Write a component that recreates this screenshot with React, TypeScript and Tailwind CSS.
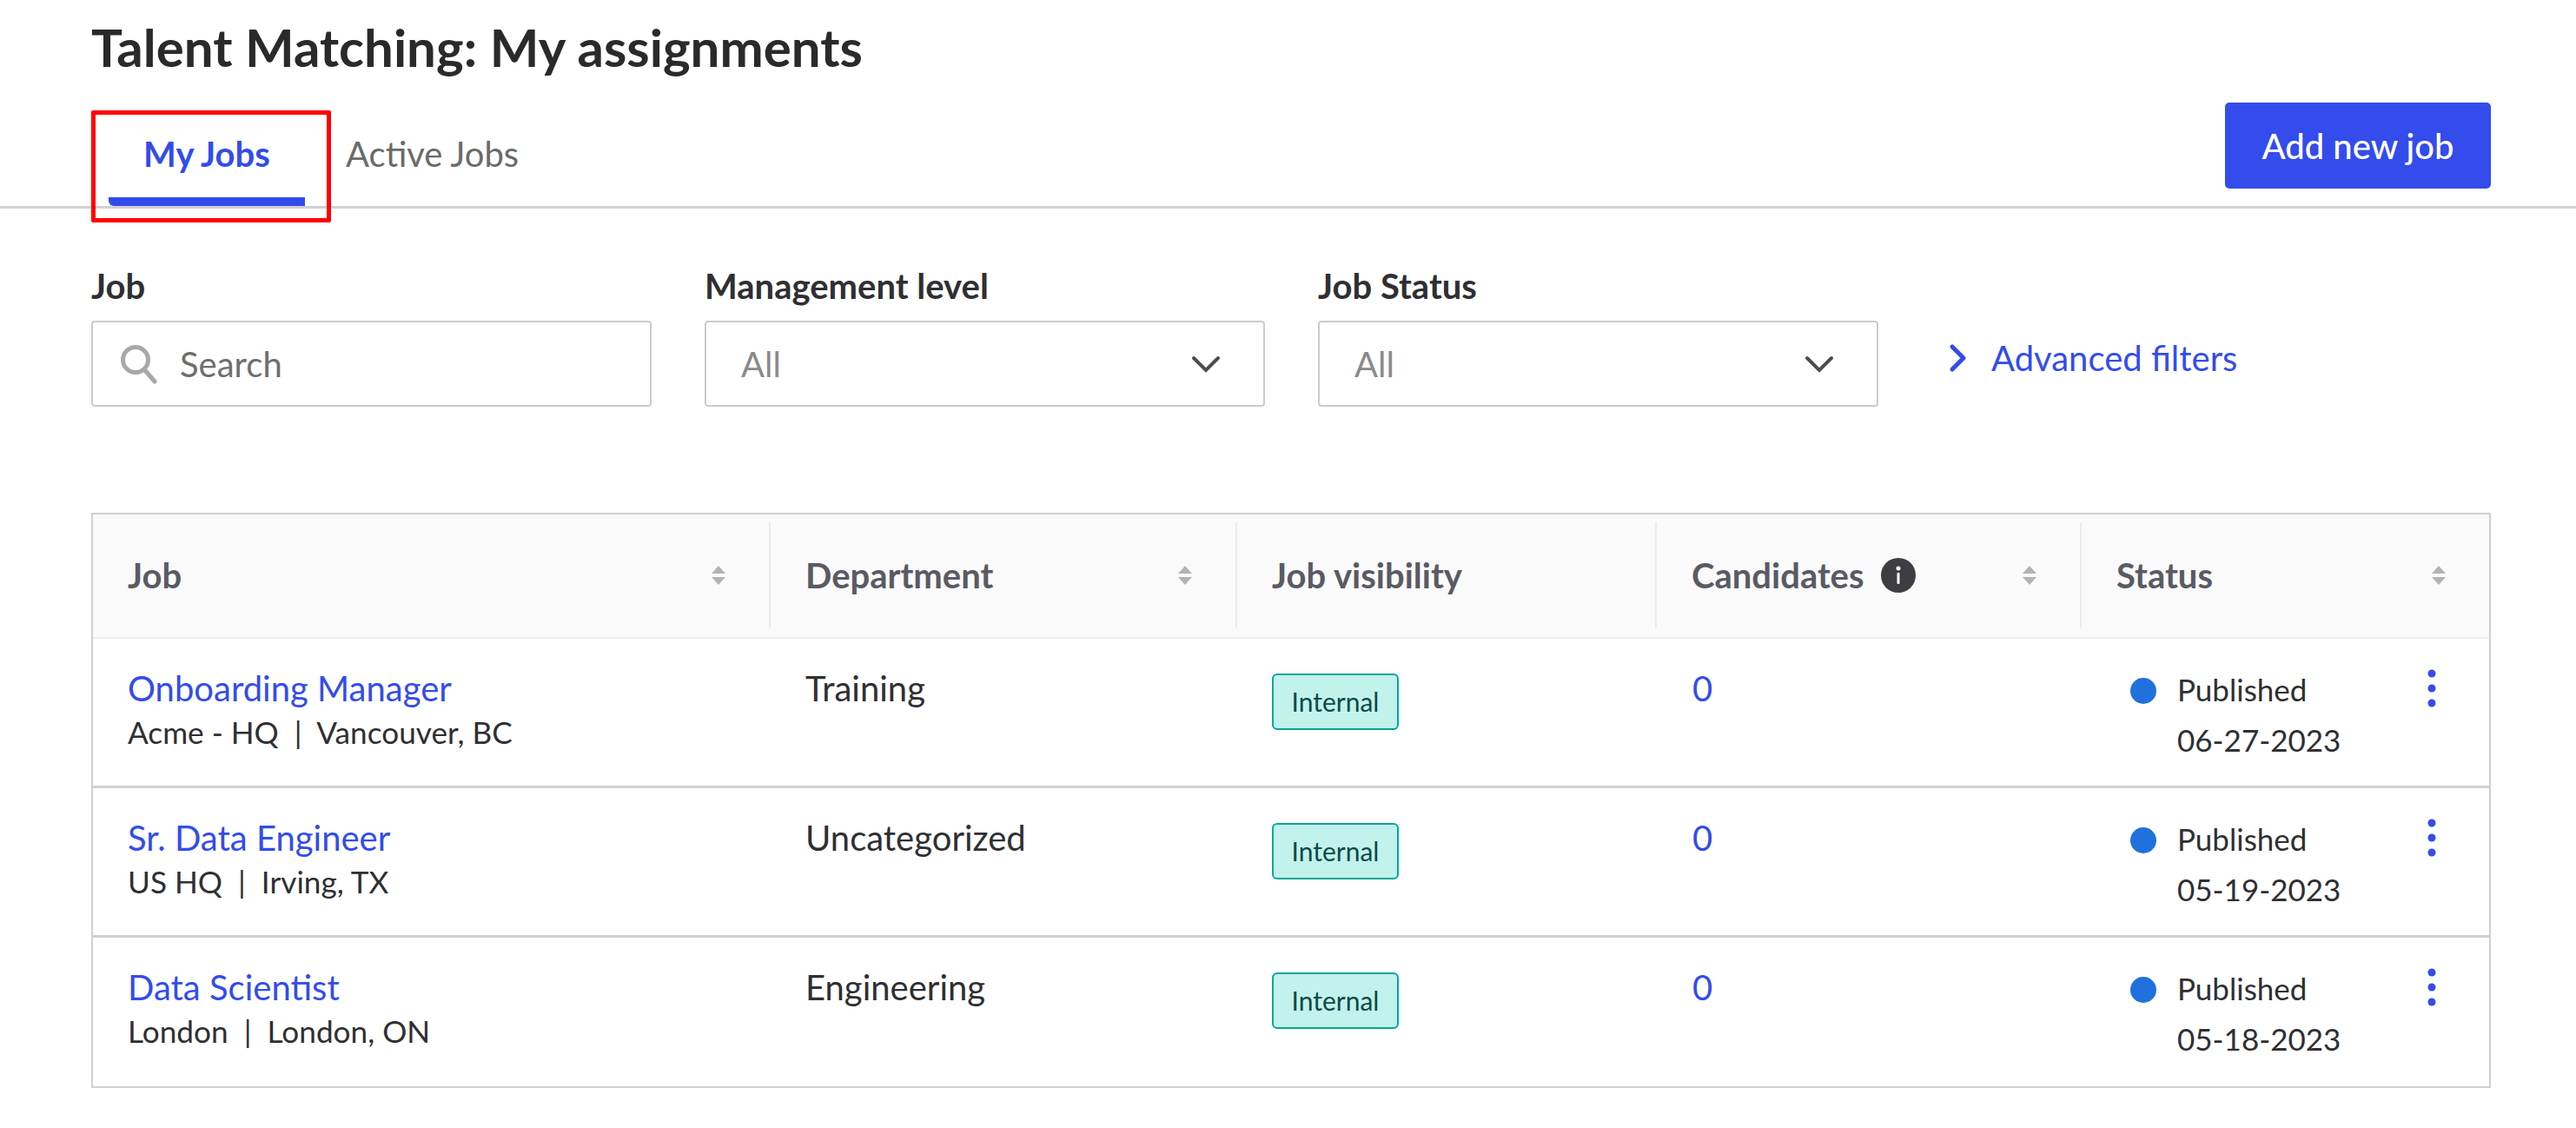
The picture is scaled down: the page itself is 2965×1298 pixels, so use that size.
const jobs = [
  { title: "Onboarding Manager", org: "Acme - HQ", place: "Vancouver, BC", dept: "Training", date: "06-27-2023" },
  { title: "Sr. Data Engineer", org: "US HQ", place: "Irving, TX", dept: "Uncategorized", date: "05-19-2023" },
  { title: "Data Scientist", org: "London", place: "London, ON", dept: "Engineering", date: "05-18-2023" },
];

const gridCols = "grid grid-cols-[780px_537px_483px_489px_1fr]";

function SortIcon() {
  return (
    <svg width="18" height="22" viewBox="0 0 18 22" className="shrink-0">
      <path d="M9 0L17 9H1z" fill="#b3b3b3" />
      <path d="M9 22L1 13h16z" fill="#b3b3b3" />
    </svg>
  );
}

function Chevron() {
  return (
    <svg width="34" height="20" viewBox="0 0 34 20" fill="none" stroke="#4d4d4d" strokeWidth="4" strokeLinecap="round">
      <path d="M3 3l14 14L31 3" />
    </svg>
  );
}

function Select({ label }: { label: string }) {
  return (
    <div className="flex w-[645px] flex-col">
      <label className="mb-[20px] h-[40px] text-[40px] leading-[40px] font-bold text-[#2f2f33]">{label}</label>
      <div className="flex h-[99px] items-center justify-between rounded-[4px] border-2 border-[#cbcbd1] pr-[49px] pl-[40px] text-[40px] text-[#8a8a8a]">
        All
        <Chevron />
      </div>
    </div>
  );
}

function HeaderCell({ label, info, sort = true }: { label: string; info?: boolean; sort?: boolean }) {
  return (
    <div className="flex h-[122px] items-center border-r-2 border-[#ececec] pr-[49px] pl-[40px] last:border-r-0">
      <span className="text-[40px] font-bold text-[#5a5a64]">{label}</span>
      {info && (
        <svg width="40" height="40" viewBox="0 0 40 40" className="ml-[19px]">
          <circle cx="20" cy="20" r="20" fill="#3d3d42" />
          <circle cx="20" cy="12" r="2.5" fill="#fff" />
          <rect x="18.5" y="17" width="3" height="13" rx="1" fill="#fff" />
        </svg>
      )}
      <span className="ml-auto flex">{sort && <SortIcon />}</span>
    </div>
  );
}

export default function App() {
  return (
    <div className="min-h-[1298px] bg-white font-['Lato',sans-serif] text-[#2f2f33]">
      <div className="px-[105px] pt-[16px]">
        <h1 className="text-[60px] leading-[76px] font-bold text-[#2a2a2a]">Talent Matching: My assignments</h1>
      </div>

      <div className="flex h-[148px] items-start justify-between border-b-[3px] border-[#d0d0d6] pr-[98px] pl-[105px]">
        <div className="flex items-start">
          <div className="relative h-[148px] w-[276px]">
            <div className="absolute top-[35px] left-0 h-[129px] w-[276px] rounded-[2px] border-[5px] border-[#ff0000]" />
            <div className="absolute top-[60px] left-0 w-full pl-[60px] text-[40px] leading-[50px] font-bold text-[#334ceb]">My Jobs</div>
            <div className="absolute top-[135px] left-[20px] h-[10px] w-[226px] rounded-bl-[6px] bg-[#334ceb]" />
          </div>
          <div className="mt-[60px] ml-[17px] text-[40px] leading-[50px] text-[#6a6a6a]">Active Jobs</div>
        </div>
        <button className="mt-[26px] h-[99px] w-[306px] rounded-[5px] bg-[#334ceb] text-[40px] font-medium text-white">Add new job</button>
      </div>

      <div className="flex items-end gap-[61px] pt-[69px] pl-[105px]">
        <div className="flex w-[645px] flex-col">
          <label className="mb-[20px] h-[40px] text-[40px] leading-[40px] font-bold">Job</label>
          <div className="flex h-[99px] items-center rounded-[4px] border-2 border-[#cbcbd1] pl-[31px] text-[40px] text-[#6e6e6e]">
            <svg width="44" height="46" viewBox="0 0 44 46" fill="none" stroke="#a8a8a8" strokeWidth="5" className="mr-[25px]">
              <circle cx="18" cy="18" r="14.5" />
              <path d="M28 29l12 14" strokeLinecap="round" />
            </svg>
            Search
          </div>
        </div>
        <Select label="Management level" />
        <Select label="Job Status" />
        <a className="mb-[26px] ml-[20px] flex items-center text-[40px] text-[#334ceb]">
          <svg width="22" height="34" viewBox="0 0 22 34" fill="none" stroke="#334ceb" strokeWidth="5" strokeLinecap="round" strokeLinejoin="round" className="mr-[27px]">
            <path d="M4 4l13 13L4 30" />
          </svg>
          Advanced filters
        </a>
      </div>

      <div className="mt-[122px] mr-[98px] ml-[105px] border-2 border-[#cfcfd4]">
        <div className={`${gridCols} h-[143px] border-b-2 border-[#ececec] bg-[#fafafa] pt-[9px]`}>
          <HeaderCell label="Job" />
          <HeaderCell label="Department" />
          <HeaderCell label="Job visibility" sort={false} />
          <HeaderCell label="Candidates" info />
          <HeaderCell label="Status" />
        </div>
        {jobs.map((job, i) => (
          <div key={job.title} className={`${gridCols} ${i < jobs.length - 1 ? "h-[172px] border-b-[3px] border-[#cfcfd4]" : "h-[171px]"}`}>
            <div className="pt-[29px] pl-[40px]">
              <div className="text-[40px] leading-[56px] text-[#334ceb]">{job.title}</div>
              <div className="text-[35.2px] leading-[44px] whitespace-pre">{`${job.org}  |  ${job.place}`}</div>
            </div>
            <div className="pt-[29px] pl-[40px] text-[40px] leading-[56px]">{job.dept}</div>
            <div className="pt-[40px] pl-[40px]">
              <span className="inline-flex h-[65px] w-[146px] items-center justify-center rounded-[6px] border-2 border-[#00a896] bg-[#c2f2ec] text-[30px] text-[#0b4a47]">
                Internal
              </span>
            </div>
            <div className="pt-[29px] pl-[41px] text-[40px] leading-[56px] text-[#334ceb]">0</div>
            <div className="relative flex pt-[29px] pl-[56px]">
              <span className="mt-[16px] h-[30px] w-[30px] shrink-0 rounded-full bg-[#2071de]" />
              <div className="ml-[24px] text-[35px] leading-[58px]">
                <div>Published</div>
                <div>{job.date}</div>
              </div>
              <svg width="10" height="44" viewBox="0 0 10 44" fill="#334ceb" className="absolute top-[35px] right-[61px]">
                <circle cx="5" cy="5" r="4.5" />
                <circle cx="5" cy="22" r="4.5" />
                <circle cx="5" cy="39" r="4.5" />
              </svg>
            </div>
          </div>
        ))}
      </div>
    </div>
  );
}
